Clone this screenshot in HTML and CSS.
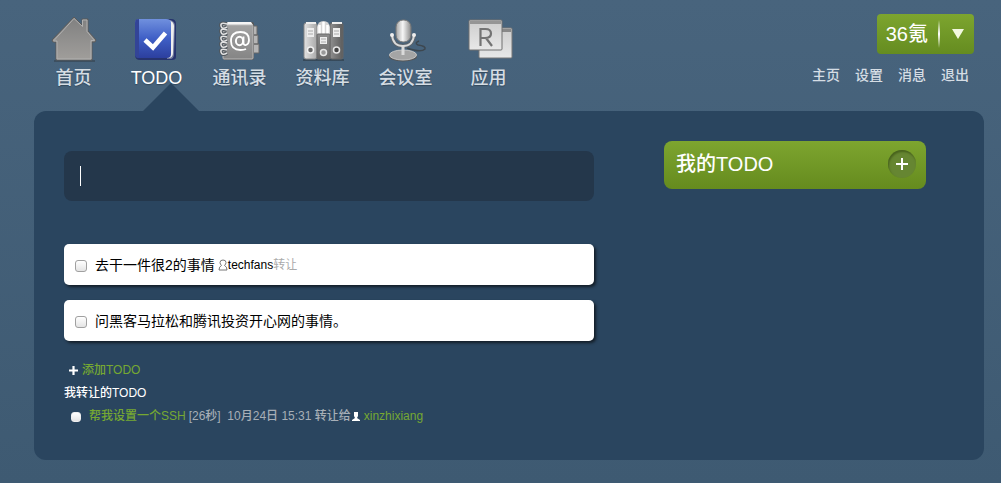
FILE: index.html
```html
<!DOCTYPE html>
<html lang="zh-CN">
<head>
<meta charset="utf-8">
<title>TODO</title>
<link rel="stylesheet" href="styles.css">
</head>
<body>
<svg class="defs" width="0" height="0" aria-hidden="true">
  <defs>
    <linearGradient id="grey" x1="0" y1="0" x2="0" y2="1"><stop offset="0" stop-color="#a3a3a3"/><stop offset="1" stop-color="#858585"/></linearGradient>
    <linearGradient id="house" x1="0" y1="0" x2="0" y2="1"><stop offset="0" stop-color="#808080"/><stop offset="1" stop-color="#a09e9b"/></linearGradient>
    <linearGradient id="light" x1="0" y1="0" x2="0" y2="1"><stop offset="0" stop-color="#cdcdcd"/><stop offset="1" stop-color="#e8e8e8"/></linearGradient>
    <linearGradient id="binder" x1="0" y1="0" x2="1" y2="0"><stop offset="0" stop-color="#e2e2e2"/><stop offset="1" stop-color="#a9a9a9"/></linearGradient>
    <linearGradient id="binder-mid" x1="0" y1="0" x2="0" y2="1"><stop offset="0" stop-color="#8c8c8c"/><stop offset="1" stop-color="#686868"/></linearGradient>
    <linearGradient id="binder-end" x1="0" y1="0" x2="1" y2="0"><stop offset="0" stop-color="#8f8f8f"/><stop offset="1" stop-color="#5c5c5c"/></linearGradient>
    <linearGradient id="blue" x1="0" y1="0" x2="0" y2="1"><stop offset="0" stop-color="#7090de"/><stop offset=".5" stop-color="#3f5fc6"/><stop offset="1" stop-color="#2c3f9e"/></linearGradient>
    <linearGradient id="mic" x1="0" y1="0" x2="1" y2="0"><stop offset="0" stop-color="#a5a5a5"/><stop offset=".45" stop-color="#f6f6f6"/><stop offset="1" stop-color="#8c8c8c"/></linearGradient>
  </defs>
</svg>

<header class="header">
  <nav class="nav">
    <a class="nav-item" href="#home">
      <svg class="nav-icon" viewBox="0 0 48 48" aria-hidden="true">
        <path d="M4 47h41" stroke="#35424e" stroke-width="2" opacity=".6"/>
        <path d="M24 3 32 11V5h6v12l8 9-1 2h-3v18H6V28H3l-1-2z" fill="url(#house)" stroke="#5a5a5a" stroke-width="1"/>
        <path d="M24 4.500 32.500 12.500V6H37v11.500l7.500 9H41V45H7V27H3.500z" fill="none" stroke="#b0b0b0" stroke-width="1"/>
      </svg>
      <span class="nav-label">首页</span>
    </a>
    <a class="nav-item active" href="#todo" aria-current="page">
      <svg class="nav-icon" viewBox="0 0 48 48" aria-hidden="true">
        <g transform="translate(-2)">
          <path d="M7 5h33q5 0 5 5v33q0 3-4 3H9q-5 0-5-5V9q0-4 3-4z" fill="#26336e"/>
          <path d="M36 6h3q5 1 5 6l-1 28q0 5-4 5h-3z" fill="#707a9c"/>
          <path d="M38 6q5 2 5 6l-1 27q0 5-5 5h-2z" fill="#eee"/>
          <path d="M8 5h27q5 0 5 4v31q0 4-4 4H8q-4 0-4-4V9q0-4 4-4z" fill="url(#blue)"/>
          <path d="M8 5v39q-4 0-4-4V9q0-4 4-4z" fill="#334497"/>
          <path d="m14 26 8 7.500L34.500 19" fill="none" stroke="#fff" stroke-width="4.500"/>
        </g>
      </svg>
      <span class="nav-label">TODO</span>
    </a>
    <a class="nav-item" href="#contacts">
      <svg class="nav-icon" viewBox="0 0 48 48" aria-hidden="true">
        <path d="M36 12h5v9h-5zM36 21h6v9h-6zM36 30h7v9h-7z" fill="#b5b5b5" stroke="#666"/>
        <rect x="7" y="8" width="31" height="38" rx="2" fill="#575757"/>
        <path d="M8 8h27l2 3H10z" fill="#f5f5f5"/>
        <rect x="7" y="11" width="30" height="34" rx="1" fill="url(#grey)" stroke="#b8b8b8"/>
        <path d="M11 10Q4 8 5 12t6 1M11 16q-7-2-6 2t6 1M11 23q-7-2-6 2t6 1M11 29q-7-2-6 2t6 1M11 36q-7-2-6 2t6 1" fill="none" stroke="#4f565c" stroke-width="3.500"/>
        <path d="M11 10Q4 8 5 12t6 1M11 16q-7-2-6 2t6 1M11 23q-7-2-6 2t6 1M11 29q-7-2-6 2t6 1M11 36q-7-2-6 2t6 1" fill="none" stroke="#e2e2e2" stroke-width="1.500"/>
        <ellipse cx="23.500" cy="27" rx="3.600" ry="4.200" fill="none" stroke="#fff" stroke-width="2"/>
        <path d="M27.500 22.500v6q0 3 2.500 2.500 3-1 3-5 0-8-8.500-8-9.500 0-9.500 9t9.500 9q3.500 0 5.500-1" fill="none" stroke="#fff" stroke-width="1.800"/>
      </svg>
      <span class="nav-label">通讯录</span>
    </a>
    <a class="nav-item" href="#files">
      <svg class="nav-icon" viewBox="0 0 48 48" aria-hidden="true">
        <path d="M4 46h41" stroke="#2d3a45" stroke-width="2" opacity=".6"/>
        <rect x="5" y="9" width="13" height="36" rx="2" fill="url(#binder)" stroke="#858585"/>
        <rect x="31" y="9" width="13" height="36" rx="2" fill="url(#binder-end)" stroke="#666"/>
        <path d="M7 9h10M33 9h10" stroke="#eee" stroke-width="2"/>
        <path d="M18 21V13q1-6 6.500-6T31 13v8z" fill="#d5d5d5"/>
        <path d="M20.500 20v-9M24.500 20V8M28.500 20v-9" stroke="#fff" stroke-width="2.500"/>
        <rect x="18" y="20" width="13" height="25" rx="1" fill="url(#binder-mid)" stroke="#686868"/>
        <path d="M8 14h7v9H8zM21 23h7v7h-7zM34 14h7v9h-7z" fill="#eee"/>
        <path d="M9 17h5M9 20h5M22 25h5M22 28h5M35 17h5M35 20h5" stroke="#aaa"/>
        <circle cx="11.500" cy="36" r="3" fill="#666" stroke="#f1f1f1" stroke-width="1.500"/>
        <circle cx="24.500" cy="38.500" r="3" fill="#999" stroke="#e6e6e6" stroke-width="1.500"/>
        <circle cx="37.500" cy="36" r="3" fill="#444" stroke="#e6e6e6" stroke-width="1.500"/>
      </svg>
      <span class="nav-label">资料库</span>
    </a>
    <a class="nav-item" href="#meeting">
      <svg class="nav-icon" viewBox="0 0 48 48" aria-hidden="true">
        <path d="M37 27q-5 2-1 4 8 1 7 4-4 4-18-1" fill="none" stroke="#3d474f" stroke-width="1.500"/>
        <ellipse cx="21" cy="42.500" rx="14" ry="5" fill="#555"/>
        <ellipse cx="21" cy="41" rx="13.500" ry="5" fill="#a5a5a5" stroke="#c5c5c5"/>
        <path d="M10 21q1 11 11 11t11-11" fill="none" stroke="#59636c" stroke-width="4"/>
        <path d="M10 21q1 11 11 11t11-11" fill="none" stroke="#dadada" stroke-width="2"/>
        <path d="M21 32v9" stroke="#dadada" stroke-width="3"/>
        <circle cx="10" cy="21" r="2" fill="#eee"/><circle cx="32" cy="21" r="2" fill="#eee"/>
        <rect x="14" y="6" width="15" height="22" rx="7" fill="url(#mic)" stroke="#777"/>
      </svg>
      <span class="nav-label">会议室</span>
    </a>
    <a class="nav-item" href="#apps">
      <svg class="nav-icon" viewBox="0 0 48 48" aria-hidden="true">
        <g transform="translate(1)">
          <rect x="13" y="14" width="33" height="30" rx="1" fill="url(#light)" stroke="#777"/>
          <path d="M14 15h31v3H14z" fill="#888"/>
          <rect x="3" y="6" width="33" height="30" rx="1" fill="url(#light)" stroke="#707070"/>
          <path d="M4 7h31v3H4z" fill="#959595"/>
          <path d="M14.500 32V15h5q5.500 0 5.500 4.500T19 24h-4.500M20 24l6 8" fill="none" stroke="#737373" stroke-width="2.200"/>
        </g>
      </svg>
      <span class="nav-label">应用</span>
    </a>
  </nav>

  <div class="account">
    <button class="account-button" type="button">
      <span class="account-name">36氪</span>
      <span class="account-divider"></span>
      <svg class="account-arrow" viewBox="0 0 12 10" aria-hidden="true"><path d="M0 0h12L6 10z" fill="#f2f8df"/></svg>
    </button>
    <nav class="account-links">
      <a href="#main">主页</a>
      <a href="#settings">设置</a>
      <a href="#messages">消息</a>
      <a href="#logout">退出</a>
    </nav>
  </div>
</header>

<main class="panel">
  <section class="tasks">
    <div class="entry">
      <input class="entry-input" type="text" aria-label="新的TODO">
    </div>
    <ul class="cards">
      <li class="card">
        <input class="check" type="checkbox" id="task-1">
        <label for="task-1">去干一件很2的事情</label>
        <span class="assignee"><svg class="person" viewBox="0 0 10 12" aria-hidden="true"><path d="M3.500 6.500Q2 5 2 3.500 2 1 5 1t3 2.500Q8 5 6.500 6.500 9 7.500 9 11H1q0-3.500 2.500-4.500z" fill="none" stroke="#777"/></svg>techfans<span class="muted">转让</span></span>
      </li>
      <li class="card">
        <input class="check" type="checkbox" id="task-2">
        <label for="task-2">问黑客马拉松和腾讯投资开心网的事情。</label>
      </li>
    </ul>
    <a class="add" href="#add">
      <svg class="plus" viewBox="0 0 9 9" aria-hidden="true"><path d="M4.500 0v9M0 4.500h9" stroke="#fff" stroke-width="2.200"/></svg>
      添加TODO
    </a>
    <h2 class="subheading">我转让的TODO</h2>
    <div class="transfer">
      <input class="check check-small" type="checkbox" id="transfer-1">
      <label for="transfer-1" class="green">帮我设置一个SSH</label>
      <span class="meta">[26秒]&nbsp; 10月24日 15:31 转让给</span>
      <svg class="person-solid" viewBox="0 0 8 10" aria-hidden="true"><path d="M2 0h4v4L5 6l3 2v1H0V8l3-2-1-2z" fill="#fff"/></svg>
      <a class="green" href="#xinzhixiang">xinzhixiang</a>
    </div>
  </section>

  <aside class="sidebar">
    <div class="list-head">
      <h1 class="list-title">我的TODO</h1>
      <button class="list-add" type="button" aria-label="添加">
        <svg viewBox="0 0 12 12" aria-hidden="true"><path d="M6 0v12M0 6h12" stroke="#fff" stroke-width="2"/></svg>
      </button>
    </div>
  </aside>
</main>
</body>
</html>
```
FILE: styles.css
```css
* {
  box-sizing: border-box;
}

body {
  margin: 0;
  min-height: 100vh;
  padding: 0 17px 23px 34px;
  background: linear-gradient(#48647d, #3e5a72);
  font-family: "Liberation Sans", "Noto Sans CJK SC", sans-serif;
  font-size: 14px;
  font-weight: 500;
  line-height: 20px;
  color: #fff;
}

a {
  color: inherit;
  text-decoration: none;
}

button {
  border: 0;
  padding: 0;
  font: inherit;
  color: inherit;
  cursor: pointer;
}

h1,
h2,
ul {
  margin: 0;
  padding: 0;
  font-weight: 500;
}

svg {
  display: block;
  flex: none;
}

.defs {
  position: absolute;
}

.header {
  display: flex;
  justify-content: space-between;
  height: 111px;
  padding-top: 14px;
}

.nav {
  display: flex;
  margin-left: -2px;
}

.nav-item {
  position: relative;
  display: flex;
  flex-direction: column;
  align-items: center;
  width: 83px;
  gap: 4px;
  font-size: 18px;
  line-height: 24px;
  color: #d5dde4;
}

.nav-icon {
  width: 48px;
  height: 48px;
}

.nav-label {
  text-shadow: 0 1px 1px #33495c;
}

.active {
  color: #fff;
}

.active::after {
  content: "";
  position: absolute;
  bottom: 0;
  left: 28px;
  width: 56px;
  height: 28px;
  background: #2a455f;
  clip-path: polygon(50% 0, 100% 100%, 0 100%);
}

.account {
  display: flex;
  flex-direction: column;
  align-items: flex-end;
  gap: 11px;
  padding-right: 10px;
}

.account-button {
  display: flex;
  align-items: center;
  height: 40px;
  padding: 0 10px 0 9px;
  border-radius: 4px;
  background: linear-gradient(#7da52f, #658c20);
  font-size: 20px;
}

.account-divider {
  width: 2px;
  height: 28px;
  margin: 0 12px 0 10px;
  background: linear-gradient(transparent, #fff, transparent);
}

.account-arrow {
  width: 12px;
  height: 10px;
}

.account-links {
  display: flex;
  gap: 15px;
  padding-right: 5px;
  color: #d5dde4;
}

.panel {
  display: grid;
  grid-template-columns: 1fr 262px;
  gap: 70px;
  padding: 30px 58px 32px 30px;
  border-radius: 12px;
  background: #2a455f;
}

.tasks {
  padding-top: 10px;
}

.entry {
  position: relative;
}

.entry::before {
  content: "";
  position: absolute;
  top: 15px;
  left: 16px;
  width: 1px;
  height: 20px;
  background: #fff;
}

.entry-input {
  display: block;
  width: 100%;
  height: 50px;
  padding: 0 16px;
  border: 0;
  border-radius: 8px;
  background: #24374b;
  font: inherit;
  color: inherit;
}

.cards {
  display: grid;
  gap: 15px;
  margin: 43px 0 18px;
  list-style: none;
  font-weight: 400;
}

.card {
  display: flex;
  align-items: center;
  min-height: 41px;
  padding: 0 11px;
  border-radius: 5px;
  background: #fff;
  box-shadow: 2px 2px 3px #141e28;
  color: #000;
}

.check {
  appearance: none;
  flex: none;
  width: 12px;
  height: 12px;
  margin: 2px 8px 0 0;
  border: 1px solid #a0a0a0;
  border-radius: 3px;
  background: linear-gradient(#fff, #e4e4e4);
}

.assignee {
  display: flex;
  align-items: center;
  margin-left: 3px;
  font-size: 12px;
}

.person {
  width: 10px;
  height: 12px;
}

.muted {
  color: #aaa;
}

.add,
.transfer {
  display: flex;
  align-items: center;
  font-size: 12px;
  line-height: 23px;
}

.add {
  width: max-content;
  gap: 4px;
  padding-left: 5px;
}

.add,
.green {
  color: #76a832;
}

.plus {
  width: 9px;
  height: 9px;
}

.subheading {
  font-size: 12px;
  line-height: 23px;
}

.transfer {
  padding-left: 7px;
}

.check-small {
  width: 10px;
  height: 10px;
  margin: 0 8px 0 0;
  border-color: #eee;
}

.meta {
  margin: 0 1px 0 3px;
  color: #a7afb7;
}

.person-solid {
  width: 8px;
  height: 10px;
  margin-right: 4px;
}

.list-head {
  display: flex;
  align-items: center;
  justify-content: space-between;
  height: 48px;
  padding: 0 10px 3px 12px;
  border-radius: 8px;
  background: linear-gradient(#7da52f, #658b1e);
}

.list-title {
  font-size: 20px;
  line-height: 28px;
}

.list-add {
  display: grid;
  place-items: center;
  width: 28px;
  height: 28px;
  border-radius: 50%;
  background: #668632;
  box-shadow: inset 1px 2px 2px #48631c;
}

.list-add svg {
  width: 12px;
  height: 12px;
}
```
